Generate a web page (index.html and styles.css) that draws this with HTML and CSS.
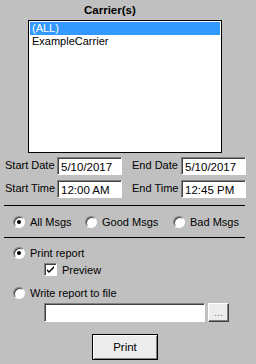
FILE: index.html
```html
<!DOCTYPE html>
<html lang="en">

<head>
  <meta charset="UTF-8" />
  <title>Carrier Report</title>
  <link rel="stylesheet" href="styles.css">
</head>

<body>
  <div class="title">Carrier(s)</div>

  <div class="listbox">
    <div class="item selected">(ALL)</div>
    <div class="item">ExampleCarrier</div>
  </div>

  <div class="dates">
    <label>Start Date</label>
    <div class="field">5/10/2017</div>
    <label>End Date</label>
    <div class="field">5/10/2017</div>
    <label>Start Time</label>
    <div class="field">12:00 AM</div>
    <label>End Time</label>
    <div class="field">12:45 PM</div>
  </div>

  <div class="sep"></div>

  <div class="msgs">
    <div class="opt opt-all"><span class="radio checked"></span>All Msgs</div>
    <div class="opt opt-good"><span class="radio"></span>Good Msgs</div>
    <div class="opt"><span class="radio"></span>Bad Msgs</div>
  </div>

  <div class="sep"></div>

  <div class="opt row-print"><span class="radio checked"></span>Print report</div>
  <div class="opt row-preview">
    <span class="check">
      <svg width="11" height="11" viewBox="0 0 11 11">
        <path d="M2 5 L4 7 L9 2 L9 4 L4 9 L2 7 Z" fill="#000" />
      </svg>
    </span>Preview
  </div>
  <div class="opt row-write"><span class="radio"></span>Write report to file</div>

  <div class="filerow">
    <div class="field file"></div>
    <div class="btn browse">...</div>
  </div>

  <div class="btn print">Print</div>
</body>

</html>
```

FILE: styles.css
```css
body {
  margin: 0;
  background: #c0c0c0;
  font-family: 'Liberation Sans', Arial, sans-serif;
  font-size: 11px;
  color: #000;
}

.title {
  margin-top: 3px;
  padding-left: 84px;
  font-size: 11.5px;
  font-weight: bold;
  line-height: 14px;
}

.listbox {
  margin: 3px 0 0 28px;
  width: 192px;
  height: 131px;
  border: 1px solid #000;
  background: #fff;
  box-shadow: 0 0 0 0 #fff;
}

.item {
  height: 13px;
  line-height: 13px;
  padding-left: 2px;
  margin: 0 1px;
  white-space: nowrap;
}

.item.selected {
  margin-top: 1px;
  background: #3399ff;
  color: #fff;
}

.dates {
  display: grid;
  grid-template-columns: 52px 75px 49px 65px;
  grid-auto-rows: 18px;
  row-gap: 5px;
  margin: 4px 0 0 5px;
  align-items: center;
}

.dates label {
  white-space: nowrap;
  padding-bottom: 3px;
}

.field {
  box-sizing: border-box;
  width: 65px;
  height: 18px;
  background: #fff;
  border: 1px solid;
  border-color: #808080 #fff #fff #808080;
  box-shadow: inset 1px 1px #404040;
  padding: 3px 0 0 3px;
  font-size: 11.5px;
  line-height: 13px;
}

.sep {
  margin: 7px 0 0 4px;
  width: 241px;
  height: 1px;
  background: #000;
}

.msgs {
  display: flex;
  margin: 9px 0 9px 13px;
}

.opt {
  display: flex;
  align-items: center;
  height: 13px;
  white-space: nowrap;
}

.opt-all {
  width: 72px;
}

.opt-good {
  width: 88px;
}

.radio {
  box-sizing: border-box;
  width: 12px;
  height: 12px;
  margin-right: 5px;
  border-radius: 50%;
  background: #fff;
  border: 1px solid;
  border-color: #808080 #fff #fff #808080;
  box-shadow: inset 1px 1px #404040;
  display: flex;
  align-items: center;
  justify-content: center;
}

.radio.checked::after {
  content: "";
  width: 4px;
  height: 4px;
  border-radius: 50%;
  background: #000;
}

.row-print {
  margin: 8px 0 0 13px;
}

.row-preview {
  margin: 4px 0 0 44px;
}

.check {
  box-sizing: border-box;
  width: 13px;
  height: 13px;
  margin-right: 5px;
  background: #fff;
  border: 1px solid;
  border-color: #808080 #fff #fff #808080;
  box-shadow: inset 1px 1px #404040;
  display: flex;
  align-items: center;
  justify-content: center;
}

.row-write {
  margin: 10px 0 0 13px;
}

.filerow {
  display: flex;
  gap: 3px;
  margin: 4px 0 0 44px;
}

.field.file {
  width: 161px;
  height: 19px;
}

.btn {
  box-sizing: border-box;
  display: flex;
  align-items: center;
  justify-content: center;
  background: #ececec;
  border: 1px solid;
  border-color: #fff #404040 #404040 #fff;
  box-shadow: inset -1px -1px #808080;
}

.browse {
  width: 21px;
  height: 19px;
  color: #808080;
  padding-bottom: 2px;
}

.print {
  margin: 12px 0 0 92px;
  width: 66px;
  height: 26px;
  border: 1px solid #000;
  box-shadow: inset 1px 1px #fff, inset -1px -1px #808080;
  font-size: 11.5px;
}
```
